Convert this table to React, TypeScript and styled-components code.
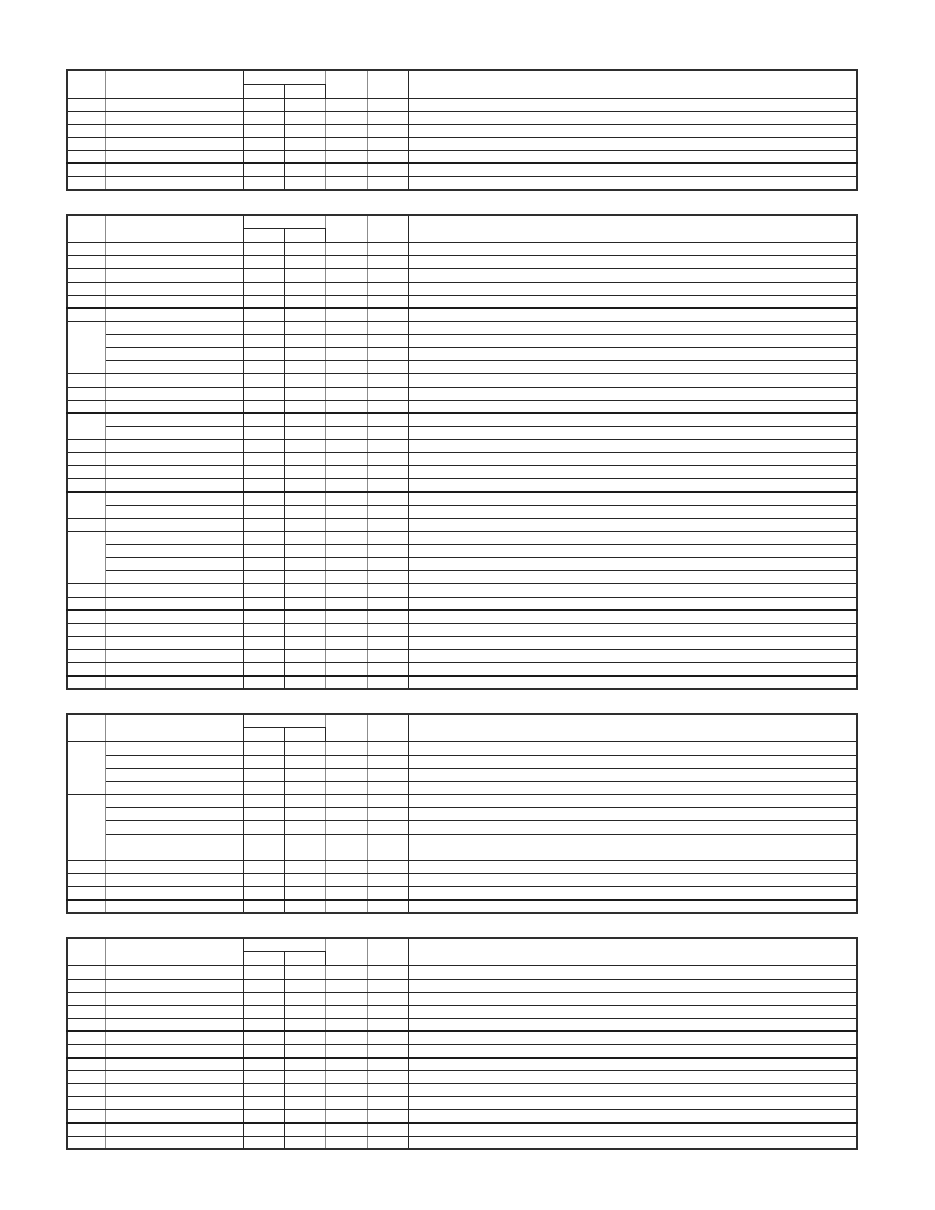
import styled, { createGlobalStyle } from "styled-components";

const GlobalStyle = createGlobalStyle`
  html, body {
    margin: 0;
    padding: 0;
    background: #ffffff;
    font-family: "Liberation Sans", Arial, sans-serif;
  }
`;

// column widths of every form (left to right)
const COLS = [38, 138, 41, 41, 42, 41, 449];
// lines to the right of these columns come out light in the scan
const SOFT_RIGHT = [0, 3, 4];

type Group = { span: number; thick?: boolean; tall?: number };

const single = (thick = false): Group => ({ span: 1, thick });

const FORMS: { rowH: number; groups: Group[] }[] = [
  {
    rowH: 13.1,
    groups: [single(), single(), single(), single(), single(), single(true), single()],
  },
  {
    rowH: 13.14,
    groups: [
      single(), single(), single(), single(), single(),
      single(true),
      { span: 4 },
      single(), single(), single(),
      { span: 2, thick: true },
      single(), single(), single(), single(),
      { span: 2, thick: true },
      single(),
      { span: 4 },
      single(), single(),
      single(true), single(), single(), single(), single(),
      single(true),
    ],
  },
  {
    rowH: 13.16,
    groups: [
      { span: 4 },
      { span: 4, tall: 3 },
      single(), single(), single(),
      single(true),
    ],
  },
  {
    rowH: 13.1,
    groups: [
      single(), single(), single(), single(), single(),
      single(true), single(),
      single(true), single(), single(), single(), single(),
      single(true), single(),
    ],
  },
];

const Page = styled.div`
  display: flex;
  flex-direction: column;
  gap: 23px;
  padding: 69px 0 40px 66px;
`;

const Sheet = styled.table`
  width: 792px;
  table-layout: fixed;
  border-collapse: collapse;
  border: 2px solid #2e2e2e;
`;

const HeadRow = styled.tr`
  height: 14px;
`;

const Row = styled.tr<{ $h: number }>`
  height: ${(p) => p.$h}px;
`;

const Cell = styled.td<{ $soft?: boolean; $thick?: boolean }>`
  padding: 0;
  border: 1px solid #262626;
  border-right-color: ${(p) => (p.$soft ? "#8c8c8c" : "#262626")};
  border-top-width: ${(p) => (p.$thick ? "2px" : "1px")};
  border-top-color: ${(p) => (p.$thick ? "#1a1a1a" : "#303030")};
`;

const soft = (col: number) => SOFT_RIGHT.includes(col);

function FormHeader() {
  return (
    <>
      <HeadRow>
        <Cell rowSpan={2} $soft={soft(0)} />
        <Cell rowSpan={2} $soft={soft(1)} />
        <Cell colSpan={2} $soft />
        <Cell rowSpan={2} $soft={soft(4)} />
        <Cell rowSpan={2} $soft={soft(5)} />
        <Cell rowSpan={2} />
      </HeadRow>
      <HeadRow>
        <Cell $soft={soft(2)} />
        <Cell $soft={soft(3)} />
      </HeadRow>
    </>
  );
}

function Form({ rowH, groups }: { rowH: number; groups: Group[] }) {
  const rows: JSX.Element[] = [];
  groups.forEach((g, gi) => {
    for (let r = 0; r < g.span; r++) {
      const h = g.tall === r ? rowH * 2 : rowH;
      const thick = r === 0 && !!g.thick;
      rows.push(
        <Row key={`${gi}-${r}`} $h={h}>
          {r === 0 && <Cell rowSpan={g.span} $soft $thick={thick} />}
          {COLS.slice(1).map((_, ci) => (
            <Cell key={ci} $soft={soft(ci + 1)} $thick={thick} />
          ))}
        </Row>
      );
    }
  });

  return (
    <Sheet>
      <colgroup>
        {COLS.map((w, i) => (
          <col key={i} style={{ width: w }} />
        ))}
      </colgroup>
      <tbody>
        <FormHeader />
        {rows}
      </tbody>
    </Sheet>
  );
}

export default function App() {
  return (
    <>
      <GlobalStyle />
      <Page>
        {FORMS.map((f, i) => (
          <Form key={i} rowH={f.rowH} groups={f.groups} />
        ))}
      </Page>
    </>
  );
}
